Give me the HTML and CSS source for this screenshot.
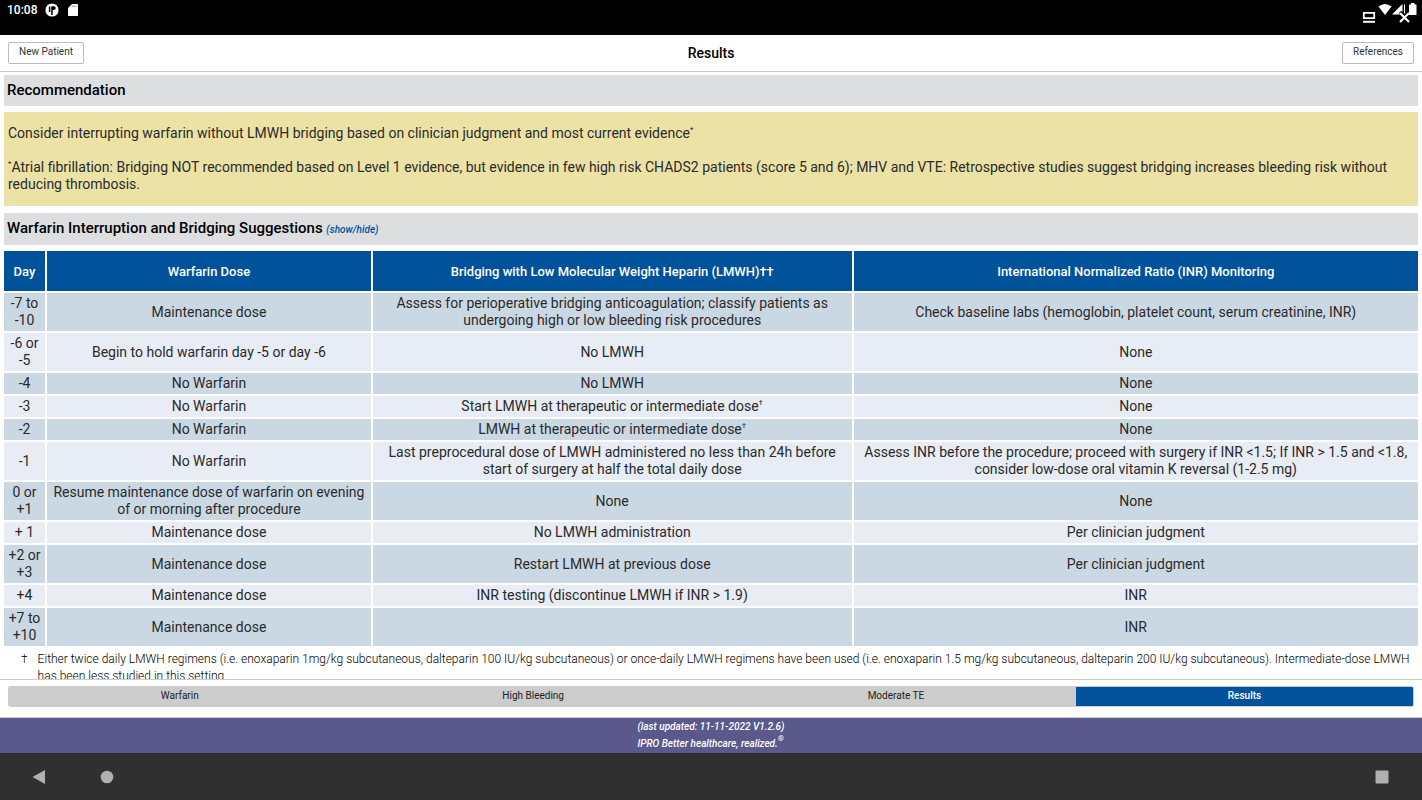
FILE: index.html
```html
<!DOCTYPE html>
<html lang="en">
<head>
    <meta charset="UTF-8">
    <meta name="viewport" content="width=device-width, initial-scale=1.0">
    <title>Results</title>
    <link rel="stylesheet" href="styles.css">
</head>
<body>
    <div class="status-bar">
        <div class="status-left">
            <span class="clock">10:08</span>
            <svg width="14" height="14" viewBox="0 0 14 14"><circle cx="7" cy="7" r="6.6" fill="#fff"/><path d="M4.600 3.500v5.500M7 12V4" stroke="#000" stroke-width="1.500"/><path d="M6.500 3.200h2.300a1.900 1.900 0 0 1 0 3.800H7z" fill="#000"/></svg>
            <svg width="12" height="14" viewBox="0 0 12 14"><path d="M5 1h5.200Q11 1 11 1.800v10.400q0 .8-.8.8H1.800Q1 13 1 12.200V5z" fill="#fff"/><path d="M4.800 2.500h1v1.500h-1zM6.600 2.500h1v1.500h-1zM8.400 2.500h1v1.500h-1z" fill="#888"/></svg>
        </div>
        <svg class="status-right" width="58" height="24" viewBox="0 0 58 24">
            <path d="M3.800 12.800h10.400v5.400H3.800z" fill="none" stroke="#fff" stroke-width="1.800"/>
            <path d="M3 21.800h12" stroke="#fff" stroke-width="2"/>
            <path d="M18.500 6.500Q25 1.500 31.500 6.500L25 15z" fill="#fff"/>
            <path d="M32 14.500L42.500 4v10.500z" fill="#fff"/>
            <path d="M40 12l9 9M49 12l-9 9" stroke="#000" stroke-width="3.500"/>
            <path d="M44.500 4.500v9" stroke="#fff"/>
            <path d="M40 13l9 9M49 13l-9 9" stroke="#fff" stroke-width="2.200"/>
            <path d="M49.500 4.500h1.500V3h3.500v1.500H56q.5 0 .5.500v9.500q0 .5-.5.500h-6.500q-.5 0-.5-.5V5q0-.5.500-.5z" fill="#fff"/>
        </svg>
    </div>

    <header class="header">
        <button type="button" class="btn">New Patient</button>
        <h1>Results</h1>
        <button type="button" class="btn">References</button>
    </header>

    <main class="content">
        <h2>Recommendation</h2>
        <div class="recommendation">
            <p>Consider interrupting warfarin without LMWH bridging based on clinician judgment and most current evidence<sup>*</sup></p>
            <p><sup>*</sup>Atrial fibrillation: Bridging NOT recommended based on Level 1 evidence, but evidence in few high risk CHADS2 patients (score 5 and 6); MHV and VTE: Retrospective studies suggest bridging increases bleeding risk without reducing thrombosis.</p>
        </div>

        <h2>Warfarin Interruption and Bridging Suggestions <a href="#suggestions">(show/hide)</a></h2>
        <table id="suggestions">
            <colgroup>
                <col class="col-day">
                <col class="col-dose">
                <col class="col-bridging">
                <col class="col-inr">
            </colgroup>
            <thead>
                <tr>
                    <th>Day</th>
                    <th>Warfarin Dose</th>
                    <th>Bridging with Low Molecular Weight Heparin (LMWH)††</th>
                    <th>International Normalized Ratio (INR) Monitoring</th>
                </tr>
            </thead>
            <tbody>
                <tr>
                    <td>-7 to<br>-10</td>
                    <td>Maintenance dose</td>
                    <td>Assess for perioperative bridging anticoagulation; classify patients as undergoing high or low bleeding risk procedures</td>
                    <td>Check baseline labs (hemoglobin, platelet count, serum creatinine, INR)</td>
                </tr>
                <tr>
                    <td>-6 or<br>-5</td>
                    <td>Begin to hold warfarin day -5 or day -6</td>
                    <td>No LMWH</td>
                    <td>None</td>
                </tr>
                <tr>
                    <td>-4</td>
                    <td>No Warfarin</td>
                    <td>No LMWH</td>
                    <td>None</td>
                </tr>
                <tr>
                    <td>-3</td>
                    <td>No Warfarin</td>
                    <td>Start LMWH at therapeutic or intermediate dose<sup>†</sup></td>
                    <td>None</td>
                </tr>
                <tr>
                    <td>-2</td>
                    <td>No Warfarin</td>
                    <td>LMWH at therapeutic or intermediate dose<sup>†</sup></td>
                    <td>None</td>
                </tr>
                <tr>
                    <td>-1</td>
                    <td>No Warfarin</td>
                    <td>Last preprocedural dose of LMWH administered no less than 24h before start of surgery at half the total daily dose</td>
                    <td>Assess INR before the procedure; proceed with surgery if INR &lt;1.5; If INR &gt; 1.5 and &lt;1.8, consider low-dose oral vitamin K reversal (1-2.5 mg)</td>
                </tr>
                <tr>
                    <td>0 or<br>+1</td>
                    <td>Resume maintenance dose of warfarin on evening of or morning after procedure</td>
                    <td>None</td>
                    <td>None</td>
                </tr>
                <tr>
                    <td>+ 1</td>
                    <td>Maintenance dose</td>
                    <td>No LMWH administration</td>
                    <td>Per clinician judgment</td>
                </tr>
                <tr>
                    <td>+2 or<br>+3</td>
                    <td>Maintenance dose</td>
                    <td>Restart LMWH at previous dose</td>
                    <td>Per clinician judgment</td>
                </tr>
                <tr>
                    <td>+4</td>
                    <td>Maintenance dose</td>
                    <td>INR testing (discontinue LMWH if INR &gt; 1.9)</td>
                    <td>INR</td>
                </tr>
                <tr>
                    <td>+7 to<br>+10</td>
                    <td>Maintenance dose</td>
                    <td></td>
                    <td>INR</td>
                </tr>
            </tbody>
        </table>
        <div class="footnote">
            <span>†</span>
            <p>Either twice daily LMWH regimens (i.e. enoxaparin 1mg/kg subcutaneous, dalteparin 100 IU/kg subcutaneous) or once-daily LMWH regimens have been used (i.e. enoxaparin 1.5 mg/kg subcutaneous, dalteparin 200 IU/kg subcutaneous). Intermediate-dose LMWH has been less studied in this setting.</p>
        </div>
    </main>

    <nav class="tabs">
        <div class="tab-group">
            <button type="button">Warfarin</button>
            <button type="button">High Bleeding</button>
            <button type="button">Moderate TE</button>
            <button type="button" class="active">Results</button>
        </div>
    </nav>

    <footer class="footer">
        <div class="footer-text">
            <p>(last updated: 11-11-2022 V1.2.6)</p>
            <p>IPRO Better healthcare, realized.<sup>®</sup></p>
        </div>
    </footer>

    <div class="system-nav">
        <button type="button" aria-label="Back"><svg width="14" height="14" viewBox="0 0 14 14"><path d="M13 0v14L0.500 7z" fill="#b0b0b0"/></svg></button>
        <button type="button" aria-label="Home"><svg width="14" height="14" viewBox="0 0 14 14"><circle cx="7" cy="7" r="6.300" fill="#b0b0b0"/></svg></button>
        <button type="button" class="recent" aria-label="Recent apps"><svg width="14" height="14" viewBox="0 0 14 14"><rect x="0.500" y="0.500" width="13" height="13" rx="1" fill="#b0b0b0"/></svg></button>
    </div>
</body>
</html>
```
FILE: styles.css
```css
* {
    box-sizing: border-box;
}
body {
    margin: 0;
    height: 100vh;
    display: flex;
    flex-direction: column;
    overflow: hidden;
    background-color: #fff;
    color: #2a2a2a;
    font-family: Roboto, sans-serif;
    font-size: 14px;
    line-height: 17px;
}
h1, h2, p {
    margin: 0;
}
button {
    font-family: inherit;
    cursor: pointer;
}
sup {
    font-size: 8px;
    line-height: 0;
    vertical-align: 6px;
}

/* Android status bar */
.status-bar {
    flex: none;
    display: flex;
    justify-content: space-between;
    height: 35px;
    padding: 0 4px 0 7px;
    background-color: #000;
    color: #fff;
}
.status-left {
    display: flex;
    align-items: center;
    gap: 8px;
    height: 20px;
}
.clock {
    font-size: 12px;
    font-weight: 500;
}

.header {
    flex: none;
    display: grid;
    grid-template-columns: 1fr auto 1fr;
    align-items: center;
    height: 37px;
    padding: 0 8px;
    border-bottom: 1px solid #ccc;
}
.header h1 {
    font-size: 14px;
    font-weight: 500;
    color: #000;
}
.btn {
    justify-self: start;
    height: 22px;
    padding: 0 10px 3px;
    border: 1px solid #bbb;
    border-radius: 2px;
    background-color: #fff;
    color: #333;
    font-size: 10px;
}
.btn:last-child {
    justify-self: end;
}

.content {
    flex: 1;
    min-height: 0;
    overflow: hidden;
    padding: 3px 4px 0;
}
h2 {
    padding: 7px 3px;
    background-color: #dddee0;
    color: #000;
    font-size: 15px;
    font-weight: 500;
}
h2 a {
    color: #00529b;
    font-size: 10px;
    font-style: italic;
    text-decoration: none;
}
.recommendation {
    margin: 6px 0 7px;
    padding: 13px 4px;
    background-color: #ece2a6;
}
.recommendation p + p {
    margin-top: 17px;
}

table {
    width: calc(100% + 4px);
    margin: 4px -2px 0;
    border-collapse: separate;
    border-spacing: 2px;
    table-layout: fixed;
    text-align: center;
}
.col-day {
    width: 41px;
}
.col-dose {
    width: 23%;
}
.col-bridging {
    width: 34%;
}
th {
    height: 40px;
    padding: 2px;
    background-color: #00529b;
    color: #fff;
    font-size: 13px;
    font-weight: 500;
}
td {
    padding: 2px;
    background-color: #e8ecf4;
}
tbody tr:nth-child(odd) td {
    background-color: #cad8e3;
}
.footnote {
    display: flex;
    gap: 10px;
    padding: 3px 4px 0 17px;
    color: #000;
    font-size: 12px;
    font-weight: 300;
}

.tabs {
    flex: none;
    height: 39px;
    padding: 6px 8px;
    border-top: 1px solid #ccc;
    border-bottom: 1px solid #ccc;
}
.tab-group {
    display: flex;
    border: 1px solid #ccc;
    border-radius: 2px;
    overflow: hidden;
}
.tab-group button {
    flex: 1 1 auto;
    height: 19px;
    padding: 0 0 2px;
    border: none;
    background-color: #ccc;
    color: #222;
    font-size: 10px;
}
.tab-group .active {
    background-color: #00529b;
    color: #fff;
    font-weight: 500;
}

.footer {
    flex: none;
    display: flex;
    justify-content: center;
    height: 35px;
    background-color: #59598c;
    color: #fff;
    font-size: 10px;
    font-style: italic;
    font-weight: 500;
}

/* Android navigation bar */
.system-nav {
    flex: none;
    display: flex;
    align-items: center;
    gap: 54px;
    height: 47px;
    padding: 0 33px 0 32px;
    background-color: #303030;
}
.system-nav button {
    display: flex;
    padding: 0;
    border: none;
    background: none;
}
.system-nav .recent {
    margin-left: auto;
}
```
